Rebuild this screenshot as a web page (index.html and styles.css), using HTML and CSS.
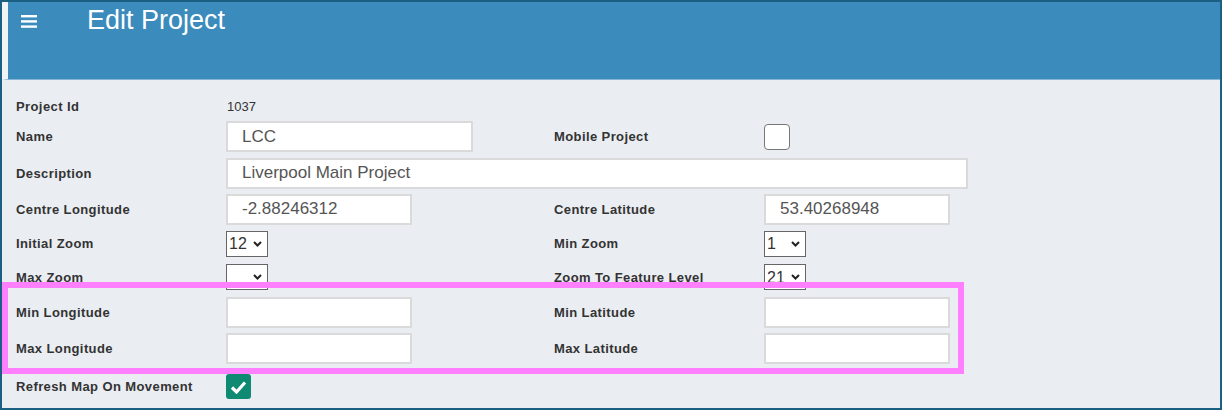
FILE: index.html
```html
<!DOCTYPE html>
<html>
<head>
    <title>Edit Project</title>
    <link rel="stylesheet" href="styles.css">
</head>
<body>
    <div class="frame">
        <div class="header">
            <svg class="menu-icon" width="16" height="13" viewBox="0 0 16 13">
                <rect x="0" y="0" width="16" height="2.4" fill="#fff"/>
                <rect x="0" y="5.2" width="16" height="2.4" fill="#fff"/>
                <rect x="0" y="10.4" width="16" height="2.4" fill="#fff"/>
            </svg>
            <h1 class="title">Edit Project</h1>
        </div>

        <div class="form">
            <label class="lbl">Project Id</label>
            <div class="val">1037</div>
            <div></div><div></div>

            <label class="lbl">Name</label>
            <div><input class="txt w-name" type="text" value="LCC"></div>
            <label class="lbl">Mobile Project</label>
            <div><span class="check"></span></div>

            <label class="lbl">Description</label>
            <div class="span3"><input class="txt w-desc" type="text" value="Liverpool Main Project"></div>

            <label class="lbl">Centre Longitude</label>
            <div><input class="txt w-coord" type="text" value="-2.88246312"></div>
            <label class="lbl">Centre Latitude</label>
            <div><input class="txt w-coord" type="text" value="53.40268948"></div>

            <label class="lbl">Initial Zoom</label>
            <div class="sel"><select><option>12</option></select><svg class="chev" width="9" height="6" viewBox="0 0 9 6"><path d="M1 1 L4.5 4.5 L8 1" stroke="#222" stroke-width="2" fill="none"/></svg></div>
            <label class="lbl">Min Zoom</label>
            <div class="sel"><select><option>1</option></select><svg class="chev" width="9" height="6" viewBox="0 0 9 6"><path d="M1 1 L4.5 4.5 L8 1" stroke="#222" stroke-width="2" fill="none"/></svg></div>

            <label class="lbl">Max Zoom</label>
            <div class="sel"><select><option></option></select><svg class="chev" width="9" height="6" viewBox="0 0 9 6"><path d="M1 1 L4.5 4.5 L8 1" stroke="#222" stroke-width="2" fill="none"/></svg></div>
            <label class="lbl">Zoom To Feature Level</label>
            <div class="sel"><select><option>21</option></select><svg class="chev" width="9" height="6" viewBox="0 0 9 6"><path d="M1 1 L4.5 4.5 L8 1" stroke="#222" stroke-width="2" fill="none"/></svg></div>

            <label class="lbl">Min Longitude</label>
            <div><input class="txt w-coord" type="text"></div>
            <label class="lbl">Min Latitude</label>
            <div><input class="txt w-coord" type="text"></div>

            <label class="lbl">Max Longitude</label>
            <div><input class="txt w-coord" type="text"></div>
            <label class="lbl">Max Latitude</label>
            <div><input class="txt w-coord" type="text"></div>

            <label class="lbl">Refresh Map On Movement</label>
            <div><span class="check on"><svg width="17" height="14" viewBox="0 0 17 14"><path d="M2 7.5 L6.5 12 L15 2.5" stroke="#fff" stroke-width="3.2" fill="none"/></svg></span></div>
            <div></div><div></div>
        </div>

        <!-- highlight round the bounds fields -->
        <div class="highlight"></div>
    </div>
</body>
</html>
```

FILE: styles.css
```css
body { margin: 0; font-family: "Liberation Sans", Arial, sans-serif; }
.frame { position: relative; width: 1222px; height: 410px; box-sizing: border-box; border: 2px solid #1b5f83; background: #eaedf2; overflow: hidden; }

.header { display: flex; align-items: flex-start; height: 77px; border-left: 6px solid #f1f4f7; border-bottom: 1px solid #86b6d4; background: #3b8bbd; }
.menu-icon { margin: 13px 0 0 13px; }
.title { margin: 5px 0 0 50px; font-size: 27px; line-height: 27px; font-weight: normal; color: #fff; }

.form { display: grid; grid-template-columns: 210px 328px 210px 1fr; grid-template-rows: 24px 37px 36px 36px 33px 34px 37px 34px 43px; align-items: center; padding: 14px 0 0 14px; }
.lbl { font-size: 13px; font-weight: bold; letter-spacing: 0.4px; color: #333; }
.val { padding-left: 1px; font-size: 13px; color: #333; }
.span3 { grid-column: span 3; }

.txt { display: block; box-sizing: border-box; height: 31px; padding: 0 14px; border: 2px solid #dadada; background: #fff; font-family: "Liberation Sans", Arial, sans-serif; font-size: 17px; color: #555; outline: none; }
.w-name { width: 247px; }
.w-desc { width: 742px; }
.w-coord { width: 186px; }

.sel { position: relative; width: 42px; height: 26px; }
.sel select { width: 42px; height: 26px; box-sizing: border-box; padding: 0 0 0 2px; border: 1px solid #666; border-radius: 0; background: #fff; -webkit-appearance: none; appearance: none; font-family: "Liberation Sans", Arial, sans-serif; font-size: 16px; color: #333; }
.chev { position: absolute; right: 6px; top: 10px; pointer-events: none; }

.check { display: flex; align-items: center; justify-content: center; width: 26px; height: 26px; box-sizing: border-box; border: 1.5px solid #777; border-radius: 4px; background: #fff; }
.check.on { width: 25px; height: 25px; border: none; border-radius: 3px; background: #0f8a72; }

.highlight { position: absolute; left: 0; top: 280px; width: 962px; height: 92px; box-sizing: border-box; border: 6px solid #ff80ff; pointer-events: none; }
```
